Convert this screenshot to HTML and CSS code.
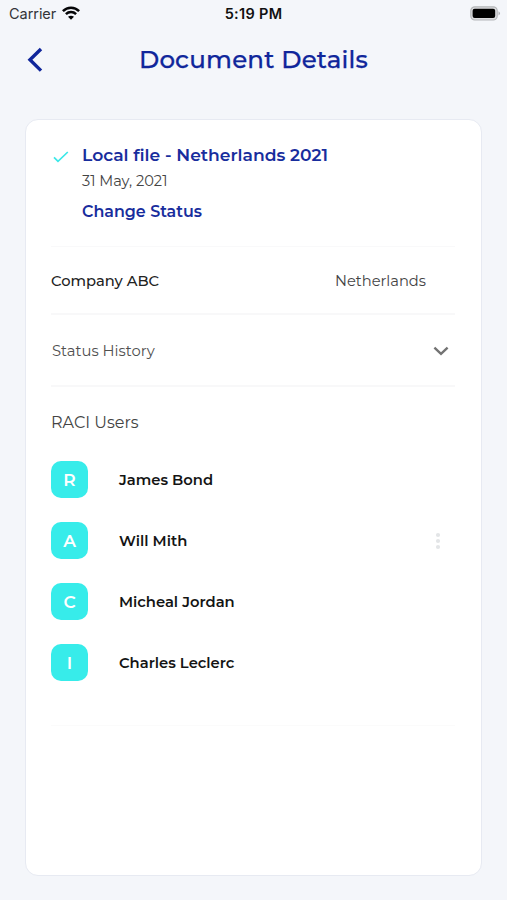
FILE: index.html
```html
<!DOCTYPE html>
<html lang="en">
<head>
<meta charset="utf-8">
<title>Document Details</title>
<link rel="stylesheet" href="styles.css">
</head>
<body>
<div class="status-bar">
  <div class="carrier"><span>Carrier</span>
    <svg width="18" height="14" viewBox="0 0 18 14" fill="none" stroke="#050507" stroke-width="2.5"><path d="M.9 5.2C5.4.6 12.6.6 17.1 5.2M3.9 8.2c2.9-2.8 7.3-2.8 10.2 0"/><path d="M9 13.7 6 10.8q3-2.3 6 0z" fill="#050507" stroke="none"/></svg>
  </div>
  <time>5:19 PM</time>
  <svg class="battery" width="31" height="15" viewBox="0 0 31 15"><rect x=".8" y=".8" width="26.4" height="13.2" rx="4" fill="#dcdddf" stroke="#b4b6b9" stroke-width="1.2"/><rect x="2.6" y="2.7" width="22.6" height="9.3" rx="2" fill="#000"/><path d="M28.5 5.2q3 2.2 0 4.4z" fill="#aeb0b3"/></svg>
</div>
<header class="nav">
  <svg class="back" width="16" height="26" viewBox="0 0 16 26" fill="none" stroke="#10269b" stroke-width="3.4"><path d="M14 2 3 12.8 14 23.6"/></svg>
  <h1>Document Details</h1>
</header>
<main class="card">
  <section class="summary">
    <svg class="check" width="16" height="12" viewBox="0 0 16 12" fill="none" stroke="#3ce8e8" stroke-width="1.7"><path d="m1 6.3 4 4L14.8 1"/></svg>
    <div>
      <h2>Local file - Netherlands 2021</h2>
      <p class="date">31 May, 2021</p>
      <a class="change">Change Status</a>
    </div>
  </section>
  <section class="row company"><span class="name">Company ABC</span><span class="country">Netherlands</span></section>
  <section class="row history"><span class="label">Status History</span>
    <svg width="16" height="10" viewBox="0 0 16 10" fill="none" stroke="#737373" stroke-width="2.4"><path d="m1.4 1.6 6.6 6.2 6.6-6.2"/></svg>
  </section>
  <section class="users">
    <h3>RACI Users</h3>
    <ul>
      <li><b>R</b><span>James Bond</span></li>
      <li><b>A</b><span>Will Mith</span><svg class="more" width="6" height="18" viewBox="0 0 6 18" fill="#e3e5e7"><circle cx="3" cy="3" r="2.1"/><circle cx="3" cy="9" r="2.1"/><circle cx="3" cy="15" r="2.1"/></svg></li>
      <li><b>C</b><span>Micheal Jordan</span></li>
      <li><b>I</b><span>Charles Leclerc</span></li>
    </ul>
  </section>
</main>
</body>
</html>
```
FILE: styles.css
```css
* { box-sizing: border-box; margin: 0; padding: 0; }
body { width: 507px; height: 900px; background: #f4f6fa; font-family: Montserrat, Inter, sans-serif; color: #141414; overflow: hidden; white-space: nowrap; }
.status-bar { display: grid; grid-template-columns: 1fr auto 1fr; align-items: center; height: 27px; padding: 0 6px 0 9px; font: 14.5px/27px Inter, sans-serif; color: #333438; }
.carrier { display: flex; align-items: center; gap: 6px; }
.carrier span { letter-spacing: -.05px; }
.carrier svg { margin-top: -2px; }
.status-bar time { margin-right: 3px; font-weight: 600; color: #111; letter-spacing: .3px; }
.battery { justify-self: end; }
.nav { display: grid; grid-template-columns: 507px; height: 92px; }
.nav > * { grid-area: 1 / 1; }
.back { margin: 20px 0 0 27px; }
h1 { text-align: center; font-size: 24.5px; line-height: 65px; font-weight: 500; color: #10269b; letter-spacing: .18px; -webkit-text-stroke: .25px #10269b; }
.card { width: 457px; height: 757px; margin-left: 25px; padding: 0 26px 0 25px; background: #fff; border: 1px solid #e7eaf2; border-radius: 13px; }
.summary { display: flex; height: 127px; padding-top: 23px; border-bottom: 1px solid #f9f9fa; }
.check { margin: 8px 13px 0 2px; }
h2 { font-size: 17.15px; line-height: 24px; font-weight: 600; color: #182d9d; }
.date { font-size: 14.6px; line-height: 26px; padding-top: 1px; color: #444; }
.change { display: block; margin-top: 5px; font-size: 15.9px; line-height: 26px; font-weight: 600; color: #182d9d; }
.row { display: flex; justify-content: space-between; align-items: center; border-bottom: 2px solid #f8f8f9; }
.company { height: 68px; padding: 2px 29px 0 0; font-size: 14.7px; }
.name { font-weight: 500; color: #222; }
.country { color: #444; }
.history { height: 72px; padding: 2px 6px 0 1px; font-size: 14.8px; }
.label { color: #505050; }
.users { height: 339px; border-bottom: 1px solid #fbfbfb; padding-top: 22px; }
h3 { font-size: 16px; line-height: 27px; font-weight: 400; color: #444; }
ul { list-style: none; display: grid; gap: 24px; margin-top: 25px; }
li { display: flex; align-items: center; height: 37px; font-size: 14.75px; font-weight: 600; }
li span { padding-top: 1px; }
li b { width: 37px; height: 37px; margin-right: 31px; border-radius: 10px; background: #37ecea; color: #fff; text-align: center; font-size: 17px; line-height: 39px; font-weight: 600; }
.more { margin: 0 14px 0 auto; }
```
